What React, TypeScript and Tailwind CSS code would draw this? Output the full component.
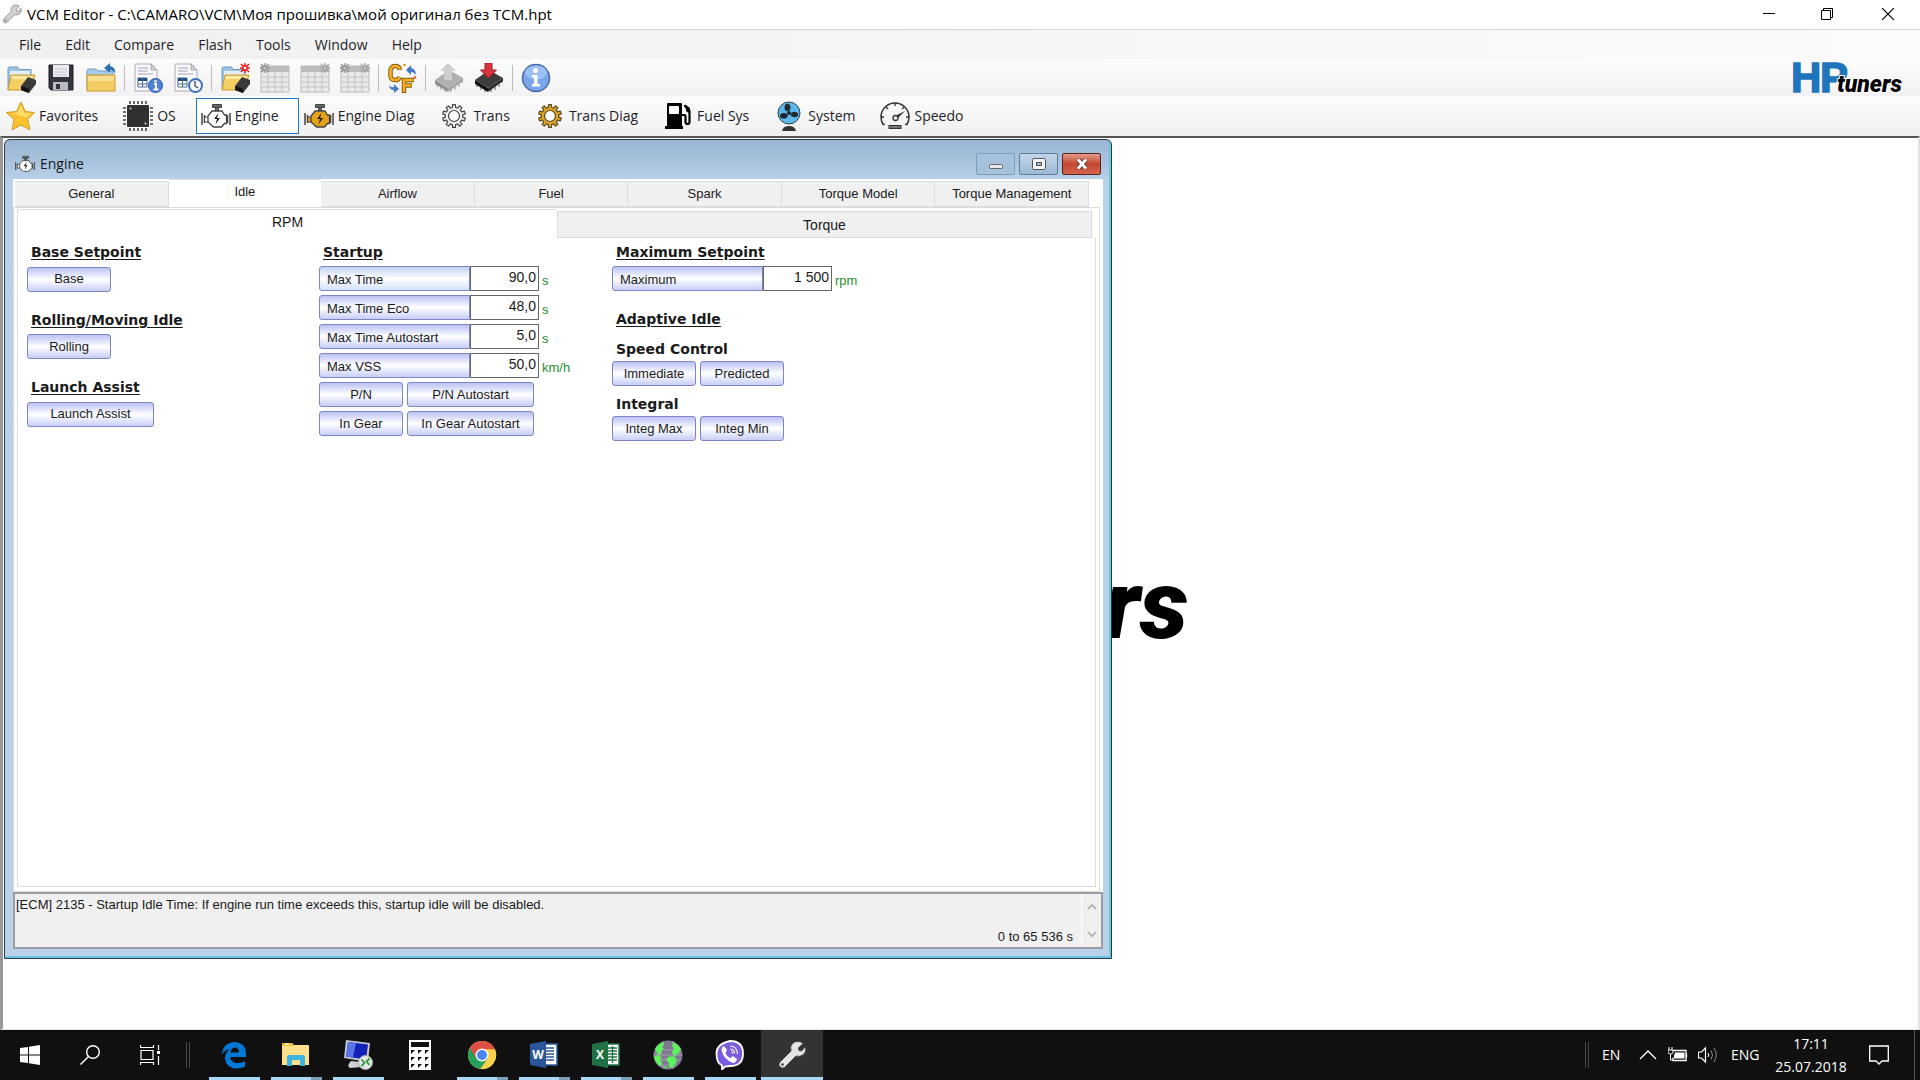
import type { ReactNode } from "react";

/* ---------- Drawing helpers ---------- */

function gearPath(cx: number, cy: number, outer: number, inner: number, teeth: number) {
  const step = (Math.PI * 2) / teeth;
  const points: string[] = [];
  for (let i = 0; i < teeth; i++) {
    const a = i * step - Math.PI / 2;
    const corners: [number, number][] = [
      [-0.3, inner],
      [-0.2, outer],
      [0.2, outer],
      [0.3, inner],
    ];
    for (const [k, r] of corners) {
      points.push(`${(cx + r * Math.cos(a + k * step)).toFixed(2)} ${(cy + r * Math.sin(a + k * step)).toFixed(2)}`);
    }
  }
  return `M${points.join("L")}Z`;
}

function Svg({ children, box = "0 0 30 30", className = "size-[30px]" }: { children: ReactNode; box?: string; className?: string }) {
  return (
    <svg viewBox={box} className={`${className} shrink-0`} fill="none" aria-hidden="true">
      {children}
    </svg>
  );
}

/* ---------- Toolbar icons ---------- */

function FolderShape() {
  return (
    <>
      <path d="M2 5.500q0-1.500 1.500-1.500h8l2 2.500h11.500v20h-23z" fill="#9cc3e2" stroke="#6f9cc4" />
      <path d="M4 8h20v6h-20z" fill="#e4eef6" />
    </>
  );
}

function Chip({ gray = false }: { gray?: boolean }) {
  const leg = gray ? "#b5b5b5" : "#8a8a8a";
  return (
    <>
      <path d="M3 19v5M7 22v5M11 25v4M17 26v3M21 22v5M25 19v5M28 15v5" stroke={leg} strokeWidth="1.500" />
      <path d="M1 17l13 8v4l-13-8z" fill={gray ? "#8e8e8e" : "#111"} />
      <path d="M14 25l15-10v3l-15 11z" fill={gray ? "#a3a3a3" : "#2b2b2b"} />
      <path d="M1 17l14-10 14 8-15 10z" fill={gray ? "#b0b0b0" : "#3c3c3c"} />
    </>
  );
}

function OpenFolder() {
  return (
    <>
      <FolderShape />
      <path d="M5 12h24l-5 15h-22z" fill="#f5cf62" stroke="#c99a2e" />
      <path d="M6 13h21l-1 3h-21z" fill="#fde9a6" />
      <path d="M15 23l7-9 8 3v4l-7 9-8-3z" fill="#3a3a3a" />
      <path d="M15 23l8 3v4l-8-3z" fill="#111" />
    </>
  );
}

function OpenChipIcon() {
  return (
    <Svg>
      <OpenFolder />
    </Svg>
  );
}

function NewStar({ x, y, color }: { x: number; y: number; color: string }) {
  return (
    <g transform={`translate(${x} ${y})`} stroke={color} strokeWidth="1.500">
      <circle r="2.200" />
      <path d="M0-2v-3M0 2v3M-2 0h-3M2 0h3M-2-2l-2-2M2-2l2-2M-2 2l-2 2M2 2l2 2" />
    </g>
  );
}

function OpenNewIcon() {
  return (
    <Svg>
      <OpenFolder />
      <NewStar x={25} y={5} color="#ef1c1c" />
    </Svg>
  );
}

function SaveIcon() {
  return (
    <Svg>
      <path d="M3 2h24v25h-22l-2-2z" fill="#33343d" stroke="#1d1e25" />
      <path d="M7 2h16v12h-16z" fill="#eceaf0" />
      <path d="M9 6h12M9 9h12M9 12h12" stroke="#c9c6d0" />
      <path d="M7 19h15v8h-15z" fill="#b9bcc4" />
      <path d="M10 21h4v5h-4z" fill="#33343d" />
    </Svg>
  );
}

function RevertFolderIcon() {
  return (
    <Svg>
      <path d="M1 8q0-2 2-2h7l2 2h15v19h-26z" fill="#a8cce8" stroke="#6f9cc4" />
      <path d="M1 12h28v16h-28z" fill="#f3cd64" stroke="#c99a2e" />
      <path d="M2 13h26v5h-26z" fill="#fbe08f" />
      <path d="M18 5l6-5v3q6 1 5 8q-1-4-5-4v3z" fill="#2c70b4" />
    </Svg>
  );
}

function DocShape() {
  return (
    <>
      <path d="M2 1h16l6 6v21h-22z" fill="#fafafc" stroke="#a9a9b3" />
      <path d="M18 1v6h6z" fill="#d2d2dc" stroke="#a9a9b3" />
      <path d="M5 5h10M5 8h10M5 11h15" stroke="#a39fc0" />
      <path d="M5 15h9v9h-9z" fill="#fff" stroke="#4b6c93" />
      <path d="M5 15h9v3h-9z" fill="#1c4e80" />
      <path d="M5 21h9M9.500 15v9" stroke="#4b6c93" />
    </>
  );
}

function DocInfoIcon() {
  return (
    <Svg>
      <DocShape />
      <circle cx="22.500" cy="22.500" r="7" fill="#4c82d8" stroke="#2a57a8" />
      <path d="M21 21h2v5M20.500 26.500h5" stroke="#fff" strokeWidth="1.800" />
      <circle cx="22.500" cy="18.300" r="1.300" fill="#fff" />
    </Svg>
  );
}

function DocClockIcon() {
  return (
    <Svg>
      <DocShape />
      <circle cx="22.500" cy="22.500" r="6.500" fill="#f4f7fc" stroke="#416fc0" strokeWidth="2" />
      <path d="M22 18v5l3 2" stroke="#444" strokeWidth="1.300" />
    </Svg>
  );
}

function TableIcon({ left = false, right = false }: { left?: boolean; right?: boolean }) {
  return (
    <Svg>
      <path d="M1 3h28v26h-28z" fill="#e9e9e9" stroke="#bcbcbc" />
      <path d="M1 3h28v6h-28z" fill="#bdbdbd" />
      <path d="M1 14h28M1 19h28M1 24h28M8 9v20M15 9v20M22 9v20" stroke="#c3c3c3" />
      {left && <NewStar x={5} y={5} color="#9a9a9a" />}
      {right && <NewStar x={25} y={5} color="#a8a8a8" />}
    </Svg>
  );
}

function UnitsIcon() {
  return (
    <Svg>
      <path d="M12.500 7V5Q11.500 3 8 3T3.500 7v6q0 3.500 4 4t5.500-3" stroke="#8a5a06" strokeWidth="4.500" />
      <path d="M12.500 6.500V5Q11.500 3 8 3T3.500 7v6q0 3.500 4 4t5.500-3" stroke="#f3b026" strokeWidth="2.600" />
      <path d="M17 30v-13h10M17 22.500h8" stroke="#8a5a06" strokeWidth="4.500" />
      <path d="M17 29v-12h9.500M17 22.500h7.500" stroke="#f3b026" strokeWidth="2.600" />
      <path d="M19 7l5-5v3q5 1 5 7q-2-3-5-3v3z" fill="#4679c8" />
      <path d="M2 21q1 4 5 3v-3l5 5-5 4v-3q-5 0-5-6z" fill="#4679c8" />
      <circle cx="17.500" cy="2" r="1.300" fill="#e08a1a" />
      <circle cx="28" cy="14.500" r="1.300" fill="#e05a1a" />
    </Svg>
  );
}

function ChipUpIcon() {
  return (
    <Svg>
      <Chip gray />
      <path d="M14 0l8 8h-4v9h-8V8H6z" fill="#cfcfcf" />
    </Svg>
  );
}

function ChipDownIcon() {
  return (
    <Svg>
      <Chip />
      <path d="M11 0h7v7h4.500l-8 8-8-8H11z" fill="#d8343c" stroke="#a61b24" />
    </Svg>
  );
}

function InfoIcon() {
  return (
    <Svg>
      <circle cx="15" cy="15" r="13.500" fill="#7ba6ea" stroke="#4569a8" strokeWidth="1.500" />
      <ellipse cx="15" cy="9.500" rx="11" ry="7" fill="#9dbff3" />
      <circle cx="14.500" cy="7.500" r="2.500" fill="#fff" />
      <path d="M11 12h5.500v9h2.500v2.500h-8v-2.500h2v-6.500h-2z" fill="#fff" />
    </Svg>
  );
}

/* ---------- Navigation icons ---------- */

function StarIcon() {
  return (
    <Svg>
      <path d="M16 1l4.300 9.500 9.200 1-6.800 7 2.300 10.500-9-5-9 5 2-10.500-7.500-7 10-1z" fill="#fbc22d" stroke="#cf9a2a" />
      <path d="M16 4l3 8 7 .5-5 4q-6-3-16-4l7-.5z" fill="#fddc72" />
    </Svg>
  );
}

function OsIcon() {
  return (
    <Svg>
      <path d="M7 0v30M11 0v30M15 0v30M19 0v30M23 0v30M0 7h30M0 11h30M0 15h30M0 19h30M0 23h30" stroke="#444" strokeWidth="1.600" />
      <rect x="3" y="3" width="24" height="24" rx="1" fill="#fafafa" />
      <rect x="4" y="4" width="22" height="22" rx="1" fill="#303030" />
      <circle cx="7.500" cy="7.500" r="1" fill="#ddd" />
      <circle cx="22.500" cy="22.500" r="1" fill="#ddd" />
    </Svg>
  );
}

function EngineIcon({ fill = "#fff", className }: { fill?: string; className?: string }) {
  return (
    <Svg className={className}>
      <path d="M11.500 3.500h9v3h-9zM14.500 6.500h3v3.500h-3z" fill="#666" stroke="#444" />
      <path d="M1 12v12M3.500 14v8M29 12v12M26.500 14v8" stroke="#444" strokeWidth="1.500" />
      <path d="M3.500 16h4v5h-4z" fill={fill} stroke="#444" />
      <path d="M11 10h10l2.500 4h2v8.500h-2l-3 3.500h-8l-5.500-5v-6z" fill={fill} stroke="#444" strokeWidth="1.300" />
      <path d="M17.500 12l-4.500 6h3l-1.500 5.500 4.500-6.500h-3z" fill="#222" />
    </Svg>
  );
}

function GearIcon({ fill, stroke }: { fill: string; stroke: string }) {
  return (
    <Svg>
      <path d={gearPath(15, 15, 11.500, 8.700, 10)} fill={fill} stroke={stroke} strokeWidth="1.200" strokeLinejoin="round" />
      <circle cx="15" cy="15" r="5.500" fill="#fafafa" stroke={stroke} strokeWidth="1.200" />
    </Svg>
  );
}

function FuelIcon() {
  return (
    <Svg>
      <path d="M4 3q0-1 1-1h13q1 0 1 1v22h1v3h-18v-3h2z" fill="#000" />
      <rect x="6" y="5" width="10" height="8" rx="1" fill="#fff" />
      <path d="M19 14h2.500q1 0 1 1v6q0 2 2 2t2-2v-11l-3-3-2-3" stroke="#000" strokeWidth="2.200" />
      <path d="M23 4l4 3v6l-4-3z" fill="#000" />
    </Svg>
  );
}

function FanIcon() {
  return (
    <Svg>
      <path d="M8 30q1-5 7-5t7 5z" fill="#333" />
      <circle cx="15" cy="12" r="11" fill="#5db8ee" stroke="#3a3f44" />
      <g fill="#1f2a33">
        <circle cx="15" cy="12" r="2" />
        <ellipse cx="13.500" cy="6.500" rx="3" ry="3.800" />
        <ellipse cx="9.800" cy="14.800" rx="3.800" ry="2.800" />
        <ellipse cx="20.500" cy="13.500" rx="3.600" ry="2.800" />
      </g>
    </Svg>
  );
}

function SpeedoIcon() {
  return (
    <Svg>
      <path d="M3.500 24A14 14 0 1 1 26.500 24" stroke="#333" strokeWidth="1.500" />
      <path d="M15 2v3M6 6l2 2M24 6l-2 2M1 16h3M29 16h-3M3 24l2-1M27 24l-2-1" stroke="#333" strokeWidth="1.300" />
      <path d="M15 15l10-5-8 8z" fill="#333" />
      <circle cx="15.500" cy="17" r="2.500" fill="#f4f4f4" stroke="#333" strokeWidth="1.300" />
      <rect x="9" y="24.500" width="12" height="3" fill="#777" stroke="#333" />
    </Svg>
  );
}

function WrenchIcon({ className, fill, stroke }: { className: string; fill: string; stroke: string }) {
  return (
    <Svg className={className}>
      <path
        d="M26 3.500l-4.500 4.500.5 2.500 2.500.5 4-4.500q1.500 5-2 8t-7.500 1.500l-11.500 11.500q-2.500 1.500-4.500-.5t-.5-4.500l11.500-11.500q-1.500-4.500 1.500-7.500t8.500-1.500z"
        fill={fill}
        stroke={stroke}
      />
      <circle cx="5.500" cy="24.500" r="1.300" fill={stroke} />
    </Svg>
  );
}

function HpLogo({ className }: { className: string }) {
  return (
    <svg viewBox="0 0 110 32" className={`${className} overflow-visible`} role="img" aria-label="HP tuners">
      <g fontFamily="Liberation Sans, sans-serif" fontWeight="700" fontSize="42" fill="#1f75bb" stroke="#1f75bb" strokeWidth="1.500">
        <text x="-2" y="30">H</text>
        <text x="27" y="30">P</text>
      </g>
      <text
        x="44"
        y="30"
        fontFamily="Roboto, sans-serif"
        fontWeight="900"
        fontStyle="italic"
        fontSize="23"
        fill="#000"
        stroke="#fff"
        strokeWidth="2"
        paintOrder="stroke"
      >
        tuners
      </text>
    </svg>
  );
}

/* ---------- Main window chrome ---------- */

const menus = ["File", "Edit", "Compare", "Flash", "Tools", "Window", "Help"];

const toolGroups: { label: string; icon: ReactNode }[][] = [
  [
    { label: "Open", icon: <OpenChipIcon /> },
    { label: "Save", icon: <SaveIcon /> },
    { label: "Close file", icon: <RevertFolderIcon /> },
  ],
  [
    { label: "Calibration info", icon: <DocInfoIcon /> },
    { label: "Calibration history", icon: <DocClockIcon /> },
  ],
  [
    { label: "Open compare file", icon: <OpenNewIcon /> },
    { label: "Table one", icon: <TableIcon left /> },
    { label: "Table two", icon: <TableIcon right /> },
    { label: "Table three", icon: <TableIcon left right /> },
  ],
  [{ label: "Switch units", icon: <UnitsIcon /> }],
  [
    { label: "Read vehicle", icon: <ChipUpIcon /> },
    { label: "Write vehicle", icon: <ChipDownIcon /> },
  ],
  [{ label: "Information", icon: <InfoIcon /> }],
];

const navItems: { label: string; icon: ReactNode }[] = [
  { label: "Favorites", icon: <StarIcon /> },
  { label: "OS", icon: <OsIcon /> },
  { label: "Engine", icon: <EngineIcon /> },
  { label: "Engine Diag", icon: <EngineIcon fill="#e2a31b" /> },
  { label: "Trans", icon: <GearIcon fill="#f1f1f1" stroke="#444" /> },
  { label: "Trans Diag", icon: <GearIcon fill="#dca62a" stroke="#5c4a1c" /> },
  { label: "Fuel Sys", icon: <FuelIcon /> },
  { label: "System", icon: <FanIcon /> },
  { label: "Speedo", icon: <SpeedoIcon /> },
];

function TitleBar() {
  return (
    <header className="flex h-[29px] shrink-0 items-center bg-white pb-px pl-0.5">
      <WrenchIcon className="size-[20px]" fill="#d0d0d0" stroke="#777" />
      <h1 className="ml-[5px] flex-1 text-[15px] leading-5">VCM Editor - C:\CAMARO\VCM\Моя прошивка\мой оригинал без TCM.hpt</h1>
      <button aria-label="Minimize" className="flex h-full w-[58px] items-center justify-center">
        <Svg className="size-3" box="0 0 12 12"><path d="M0 5.500h12" stroke="#000" /></Svg>
      </button>
      <button aria-label="Restore" className="flex h-full w-[58px] items-center justify-center">
        <Svg className="size-3" box="0 0 12 12"><path d="M.5 2.500h9v9h-9zM2.500 2.500v-2h9v9h-2" stroke="#000" /></Svg>
      </button>
      <button aria-label="Close" className="flex h-full w-16 items-center justify-center">
        <Svg className="size-3" box="0 0 12 12"><path d="M0 0l12 12M12 0l-12 12" stroke="#000" strokeWidth="1.200" /></Svg>
      </button>
    </header>
  );
}

function Toolbars() {
  return (
    <div className="relative shrink-0 border-t border-gray-300">
      <nav aria-label="Menu" className="flex h-[29px] items-center bg-linear-to-r from-[#f0f0f0] to-[#fbfbfb] pl-[7px]">
        {menus.map((m) => (
          <button key={m} className="px-3 text-[14px] leading-5 text-[#1e1e2a]">{m}</button>
        ))}
      </nav>
      <div role="toolbar" aria-label="Tools" className="flex h-[37px] items-center bg-linear-to-b from-[#fcfcfc] to-[#f2f2f2] pl-px">
        {toolGroups.map((group, i) => (
          <div key={i} className="flex items-center">
            {i > 0 && <span className="mx-[3px] h-[26px] w-px bg-[#bdbdbd]" />}
            {group.map((t) => (
              <button key={t.label} aria-label={t.label} className="flex w-10 justify-center">{t.icon}</button>
            ))}
          </div>
        ))}
      </div>
      <nav aria-label="Sections" className="flex h-10 items-center bg-linear-to-b from-[#fcfcfc] to-[#f0f0f0]">
        {navItems.map((n) => (
          <button
            key={n.label}
            className={`flex h-9 items-center gap-1 border pr-[19px] pl-1 text-[14px] leading-5 whitespace-nowrap text-[#1e1e2a] ${
              n.label === "Engine" ? "border-[#1979ca] bg-white" : "border-transparent"
            }`}
          >
            {n.icon}
            {n.label}
          </button>
        ))}
      </nav>
      <HpLogo className="absolute top-8 right-[17px] w-[110px]" />
    </div>
  );
}

/* ---------- Engine window ---------- */

function PushButton({ children, wide = false }: { children: ReactNode; wide?: boolean }) {
  return (
    <button
      className={`h-[25px] rounded-[3px] border border-[#7f86c4] bg-linear-to-b from-[#bcc2f2] via-white to-[#c9cef6] text-[13px] leading-5 whitespace-nowrap ${
        wide ? "w-[127px]" : "w-[84px]"
      }`}
    >
      {children}
    </button>
  );
}

function ValueRow({ id, label, value, unit, active = false }: { id: string; label: string; value: string; unit: string; active?: boolean }) {
  return (
    <div className="flex h-[25px] items-stretch">
      <label
        htmlFor={id}
        className={`w-[151px] rounded-l-[3px] border border-[#7f86c4] bg-linear-to-b pt-px pl-[7px] text-[13px] leading-[24px] ${
          active ? "from-[#c3d2f6] via-white to-[#d5e2fb]" : "from-[#bcc2f2] via-white to-[#c9cef6]"
        }`}
      >
        {label}
      </label>
      <input id={id} defaultValue={value} className="w-[69px] border border-[#666] bg-white pr-0.5 pb-1 text-right text-[14px] leading-5" />
      <span className="ml-[3px] self-end text-[13px] leading-5 text-[#1f8f2c]">{unit}</span>
    </div>
  );
}

function Heading({ children, plain = false }: { children: ReactNode; plain?: boolean }) {
  return (
    <h2 className={`pl-1 font-["DejaVu_Sans",sans-serif] text-[14px] leading-4 font-bold whitespace-nowrap ${plain ? "" : "underline underline-offset-2"}`}>
      {children}
    </h2>
  );
}

const tabs = ["General", "Idle", "Airflow", "Fuel", "Spark", "Torque Model", "Torque Management"];

const windowButton = "flex h-[22px] w-[39px] items-center justify-center rounded-[2px] border";

function EngineWindow() {
  return (
    <section
      aria-label="Engine"
      className="absolute top-px left-px flex h-[820px] w-[1108px] flex-col rounded-t-md border border-[#2b3a44] bg-linear-to-b from-[#98b4d1] via-[#b9d1ea] via-5% to-[#b9d1ea] px-2 pb-[9px] text-[#1a1a1a] shadow-[inset_-1px_-1px_0_1px_#6cc6e4]"
    >
      <div className="flex h-[39px] shrink-0 items-center pt-2 pl-0.5">
        <EngineIcon className="size-[20px]" />
        <span className='ml-[5px] flex-1 font-["Open_Sans",sans-serif] text-[14px] leading-5'>Engine</span>
        <div className="flex gap-1 pr-0.5">
          <button aria-label="Minimize window" className={`${windowButton} border-[#7e9bb9] bg-[#a5c1dd]`}>
            <Svg className="size-[14px]" box="0 0 14 14"><rect x="0.500" y="7.500" width="13" height="4" rx="1" fill="#e8e8e8" stroke="#666" /></Svg>
          </button>
          <button aria-label="Maximize window" className={`${windowButton} border-[#5f7f9f] bg-linear-to-b from-[#c3d6ea] to-[#9dbad6]`}>
            <Svg className="size-[14px]" box="0 0 14 14">
              <rect x="0.500" y="1.500" width="13" height="11" rx="1" fill="#f4f4f4" stroke="#555" />
              <rect x="4.500" y="5.500" width="5" height="3" fill="#9dbad6" stroke="#555" />
            </Svg>
          </button>
          <button aria-label="Close window" className={`${windowButton} border-[#5b1f1c] bg-linear-to-b from-[#e39b8c] via-[#c4452f] to-[#d4664f]`}>
            <Svg className="size-[14px]" box="0 0 14 14">
              <path d="M3 2.500l8 9M11 2.500l-8 9" stroke="#5b3a3a" strokeWidth="4.500" />
              <path d="M3 2.500l8 9M11 2.500l-8 9" stroke="#fff" strokeWidth="2.800" />
            </Svg>
          </button>
        </div>
      </div>

      <div className="flex min-h-0 flex-1 flex-col bg-white">
        <div role="tablist" aria-label="Engine pages" className="flex h-[28px] shrink-0 items-end pr-[14px] pl-0.5">
          {tabs.map((t) => (
            <button
              key={t}
              role="tab"
              aria-selected={t === "Idle"}
              className={`flex-1 whitespace-nowrap text-[13px] leading-5 ${
                t === "Idle" ? "h-[28px] border-t border-[#ddd] bg-white pb-1" : "h-[26px] border border-l-0 border-[#dcdcdc] bg-[#f0f0f0]"
              }`}
            >
              {t}
            </button>
          ))}
        </div>
        <div className="mr-[3px] flex min-h-0 flex-1 flex-col border border-[#dcdcdc] px-[3px] pt-px pb-1">
          <div role="tablist" aria-label="Idle pages" className="flex h-[29px] shrink-0 items-end pr-1">
            <button role="tab" aria-selected="true" className="h-[29px] basis-[540px] border-t border-l border-[#dcdcdc] bg-white pb-1 text-[14px] leading-5">
              RPM
            </button>
            <button role="tab" aria-selected="false" className="h-[27px] flex-1 border border-[#dcdcdc] bg-[#f0f0f0] text-[14px] leading-5">
              Torque
            </button>
          </div>
          <div className="flex flex-1 border border-t-0 border-[#dcdcdc] pt-[6px] pl-[9px]">
            <div className="flex w-[292px] flex-col items-start">
              <Heading>Base Setpoint</Heading>
              <div className="mt-[6px] mb-[20px]"><PushButton>Base</PushButton></div>
              <Heading>Rolling/Moving Idle</Heading>
              <div className="mt-[6px] mb-[20px]"><PushButton>Rolling</PushButton></div>
              <Heading>Launch Assist</Heading>
              <div className="mt-[6px]"><PushButton wide>Launch Assist</PushButton></div>
            </div>
            <div className="flex w-[293px] flex-col">
              <Heading>Startup</Heading>
              <div className="mt-[6px] flex flex-col gap-1">
                <ValueRow id="max-time" label="Max Time" value="90,0" unit="s" active />
                <ValueRow id="max-time-eco" label="Max Time Eco" value="48,0" unit="s" />
                <ValueRow id="max-time-autostart" label="Max Time Autostart" value="5,0" unit="s" />
                <ValueRow id="max-vss" label="Max VSS" value="50,0" unit="km/h" />
                <div className="flex gap-1"><PushButton>P/N</PushButton><PushButton wide>P/N Autostart</PushButton></div>
                <div className="flex gap-1"><PushButton>In Gear</PushButton><PushButton wide>In Gear Autostart</PushButton></div>
              </div>
            </div>
            <div className="flex flex-col">
              <Heading>Maximum Setpoint</Heading>
              <div className="mt-[6px] mb-[20px]">
                <ValueRow id="maximum" label="Maximum" value="1 500" unit="rpm" />
              </div>
              <Heading>Adaptive Idle</Heading>
              <div className="mt-[14px]"><Heading plain>Speed Control</Heading></div>
              <div className="mt-1 flex gap-1"><PushButton>Immediate</PushButton><PushButton>Predicted</PushButton></div>
              <div className="mt-[10px]"><Heading plain>Integral</Heading></div>
              <div className="mt-1 flex gap-1"><PushButton>Integ Max</PushButton><PushButton>Integ Min</PushButton></div>
            </div>
          </div>
        </div>
      </div>

      <div className="flex h-[57px] shrink-0 border-2 border-[#9c9ca4] bg-[#f0f0f0] text-[13px] leading-5">
        <div className="flex flex-1 flex-col justify-between pt-px pl-px">
          <p>[ECM] 2135 - Startup Idle Time: If engine run time exceeds this, startup idle will be disabled.</p>
          <p className="pr-2 text-right">0 to 65 536 s</p>
        </div>
        <div className="flex w-5 flex-col items-center justify-between border-l border-white py-2">
          <Svg className="size-[10px]" box="0 0 10 10"><path d="M1 7l4-4 4 4" stroke="#bbb" strokeWidth="2" /></Svg>
          <Svg className="size-[10px]" box="0 0 10 10"><path d="M1 3l4 4 4-4" stroke="#bbb" strokeWidth="2" /></Svg>
        </div>
      </div>
    </section>
  );
}

/* ---------- Taskbar ---------- */

function OfficeIcon({ color, letter, sheet = false }: { color: string; letter: string; sheet?: boolean }) {
  return (
    <Svg>
      <path d="M14 4h14v21h-14z" fill="#fff" stroke={color} strokeWidth="1.500" />
      <path d={sheet ? "M17 8h9M17 11h9M17 14h9M17 17h9M17 20h9M21.500 6v17" : "M17 8h8M17 11h8M17 14h8M17 17h8M17 20h8"} stroke={color} strokeWidth="1.300" />
      <path d="M1 4l16-3v27l-16-3z" fill={color} />
      <text x="9" y="19" textAnchor="middle" fontFamily="Open Sans, sans-serif" fontWeight="700" fontSize="12" fill="#fff">{letter}</text>
    </Svg>
  );
}

const edge = (
  <Svg>
    <path d="M3 13Q5 2 16 2q11 1 11 12v3h-16q1 6 8 6 4 0 7-2v5.500q-4 2-9 2-10-1-11-10 0-6 5-9.500-5 1-8 5zM11.500 12.500h8.500q-.5-5-4-5-4 .5-4.500 5z" fill="#0078d7" fillRule="evenodd" />
  </Svg>
);

const explorer = (
  <Svg>
    <path d="M1 4q0-1 1-1h9l2 2h14q1 0 1 1v19h-27z" fill="#ffe08a" />
    <path d="M1 4q0-1 1-1h9l2 3h-12z" fill="#f2bd35" />
    <path d="M4 3.500h4v1.500h-4z" fill="#fff" />
    <path d="M6 26v-9q0-2 2-2h14q2 0 2 2v9h-5v-6h-8v6z" fill="#3fb2dd" />
  </Svg>
);

const remoteDesktop = (
  <Svg>
    <path d="M8 21l9 1 2 5-12 1q-4-2 1-7z" fill="#ccd0d6" />
    <path d="M3 0l24 3-2 19-24-4z" fill="#c3c8d0" />
    <path d="M5 2l20 2.500-2 15-20-3z" fill="#1522b8" />
    <path d="M5 2l8 1-3 14.500-7-1z" fill="#5a74ea" />
    <circle cx="22.500" cy="22.500" r="7" fill="#e3e5e6" stroke="#aaa" />
    <path d="M18.500 19.500l3 3.500-3 3M26.500 18.500l-3 3 3 3.500" stroke="#2d9d3c" strokeWidth="1.800" />
  </Svg>
);

const calculator = (
  <Svg>
    <path d="M4 0h22v30h-22z" fill="#fff" />
    <path d="M6 2h18v5h-18z" fill="#101010" />
    <path d="M6 10h4l-4 4zM13 10h4l-4 4zM20 10h4l-4 4zM6 17h4l-4 4zM13 17h4l-4 4zM20 17h4l-4 4zM6 24h4l-4 4zM13 24h4l-4 4zM20 24h4l-4 4z" fill="#101010" />
  </Svg>
);

const chrome = (
  <Svg>
    <circle cx="15" cy="15" r="14" fill="#fbd04a" />
    <path d="M15 15L2.900 8A14 14 0 0 0 13.500 29z" fill="#24a05a" />
    <path d="M15 15L13.500 29l7.500-11z" fill="#24a05a" />
    <path d="M2.900 8A14 14 0 0 1 28 9.500H15L9 18z" fill="#dd4f43" />
    <path d="M28 9.500H15l6 9L13.500 29A14 14 0 0 0 28 9.500z" fill="#fbd04a" />
    <circle cx="15" cy="15" r="6.500" fill="#fff" />
    <circle cx="15" cy="15" r="5" fill="#4a86ef" />
  </Svg>
);

const globe = (
  <Svg>
    <circle cx="15" cy="15" r="14.500" fill="#7f7890" />
    <path d="M3 10h24M1 15h28M3 20h24M7 25h16M10 1q-4 14 0 28M20 1q4 14 0 28" stroke="#a39db0" />
    <path d="M2 9q3-5 8-7l1 3-2 2 2 2-3 2 0 3-3 1zM1 16l4-1 3 2-1 3 2 4-2 2q-5-3-6-10zM20 2q6 3 8 8l-2 1 1 3-3-1-1 3-3-1-1-4 2-2-2-3zM15 17l5-1 4 3-1 4-3 4-4 1 0-5-3-3zM10 26l4 1-1 2z" fill="#5cf25c" />
  </Svg>
);

const viber = (
  <Svg>
    <path d="M15 1q13 0 13 12.500T15 26l-5 .5-3 3v-4q-5.500-2.500-5.500-12T15 1z" fill="#7b5be0" stroke="#fff" strokeWidth="1.800" />
    <path d="M9 6l3 4-1.500 3q1.500 4 5 5l2.500-2 4 3q-1 4-4 4Q9 20 6.500 10 6.500 7 9 6z" fill="#fff" />
    <path d="M15 6q7 0 7.500 8M15.500 9q4 .5 4 4.500M16 11.500q1.500 0 1.500 2" stroke="#fff" strokeWidth="1.200" />
  </Svg>
);

type TaskbarApp = { label: string; icon: ReactNode; state: "idle" | "open" | "stacked" | "active" };

const apps: TaskbarApp[] = [
  { label: "Edge", icon: edge, state: "open" },
  { label: "File Explorer", icon: explorer, state: "stacked" },
  { label: "Remote Desktop", icon: remoteDesktop, state: "open" },
  { label: "Calculator", icon: calculator, state: "idle" },
  { label: "Chrome", icon: chrome, state: "stacked" },
  { label: "Word", icon: <OfficeIcon color="#2a579a" letter="W" />, state: "stacked" },
  { label: "Excel", icon: <OfficeIcon color="#207245" letter="X" sheet />, state: "stacked" },
  { label: "Globe", icon: globe, state: "open" },
  { label: "Viber", icon: viber, state: "open" },
  { label: "VCM Editor", icon: <WrenchIcon className="size-[30px]" fill="#e4e4e4" stroke="#444" />, state: "active" },
];

function Taskbar() {
  return (
    <footer className="flex h-[50px] shrink-0 items-center bg-[#101010] text-white">
      <button aria-label="Start" className="flex w-[60px] justify-center">
        <Svg className="size-5" box="0 0 20 20"><path d="M0 3l8-1v7.500H0zM9 1.800L20 0v9.500H9zM0 10.500h8V18l-8-1zM9 10.500h11V20L9 18.200z" fill="#fff" /></Svg>
      </button>
      <button aria-label="Search" className="flex w-[60px] justify-center">
        <Svg className="size-5" box="0 0 20 20"><circle cx="13" cy="7" r="6.300" stroke="#fff" strokeWidth="1.400" /><path d="M8.500 11.500l-8 8" stroke="#fff" strokeWidth="1.400" /></Svg>
      </button>
      <button aria-label="Task view" className="flex w-[60px] justify-center">
        <Svg className="size-5" box="0 0 20 20">
          <path d="M1 5.500h12v9H1zM.500 0v2.500h13V0M.500 20v-2.500h13V20M18.500 0v5M18.500 11v9" stroke="#fff" strokeWidth="1.200" />
          <path d="M17 6h3v3h-3z" fill="#fff" />
        </Svg>
      </button>
      <span className="ml-[6px] h-[26px] w-1 border-x border-[#444]" />
      <div className="ml-[13px] flex h-full">
        {apps.map((a) => (
          <button key={a.label} aria-label={a.label} className={`flex h-full w-[62px] flex-col items-center pt-[10px] ${a.state === "active" ? "bg-[#333]" : ""}`}>
            {a.icon}
            <span className={`mt-auto flex h-[3px] ${a.state === "active" ? "w-full" : "w-[51px]"} ${a.state === "idle" ? "" : "bg-[#a9d8f8]"}`}>
              {a.state === "stacked" && <span className="ml-auto w-[11px] bg-[#7d9fb5]" />}
            </span>
          </button>
        ))}
      </div>
      <span className="ml-auto h-[26px] w-1 border-x border-[#444]" />
      <div className="flex h-full items-center text-[14px] leading-5">
        <span className="ml-[13px] w-[20px]">EN</span>
        <button aria-label="Show hidden icons" className="ml-[17px]">
          <Svg className="size-[18px]" box="0 0 18 18"><path d="M1 13l8-8 8 8" stroke="#fff" strokeWidth="1.400" /></Svg>
        </button>
        <Svg className="ml-[11px] size-5" box="0 0 20 20">
          <path d="M5 5.500h13v10H5v-3M18.500 8.500v4" stroke="#fff" strokeWidth="1.300" />
          <path d="M7 7.500h9.500v6H6v-3z" fill="#fff" />
          <path d="M1 2v3M4 2v3M0 5h5v2q0 2-2.500 2T0 7zM2.500 9v6H5" stroke="#fff" />
        </Svg>
        <Svg className="ml-[10px] size-5" box="0 0 20 20">
          <path d="M.500 7h3l4-4v14l-4-4h-3z" stroke="#fff" strokeWidth="1.200" />
          <path d="M10 8q1.500 2 0 4" stroke="#fff" />
          <path d="M13 5.500q3 4.500 0 9M16 3q4.500 7 0 14" stroke="#888" />
        </Svg>
        <span className="ml-[13px] w-[32px]">ENG</span>
        <time className="ml-[6px] w-[84px] text-center leading-[23px]">17:11<br />25.07.2018</time>
        <button aria-label="Notifications" className="ml-[16px]">
          <Svg className="size-5" box="0 0 20 20"><path d="M.700 1h18.600v15h-6.300l-3 3-3-3H.700z" stroke="#fff" strokeWidth="1.300" /></Svg>
        </button>
      </div>
      <span className="ml-[25px] h-full w-px bg-[#555]" />
      <span className="w-[5px]" />
    </footer>
  );
}

export default function App() {
  return (
    <div className='flex h-screen flex-col overflow-hidden bg-white font-["Open_Sans","Noto_Sans",sans-serif] text-black'>
      <TitleBar />
      <Toolbars />
      <main className='relative flex min-h-0 flex-1 items-center justify-center border-t-2 border-r-2 border-b border-l-[3px] border-t-[#555] border-r-[#e3e3e3] border-b-[#e3e3e3] border-l-[#999] bg-white font-["Liberation_Sans",sans-serif]'>
        <HpLogo className="mb-2.5 w-[464px]" />
        <EngineWindow />
      </main>
      <Taskbar />
    </div>
  );
}
